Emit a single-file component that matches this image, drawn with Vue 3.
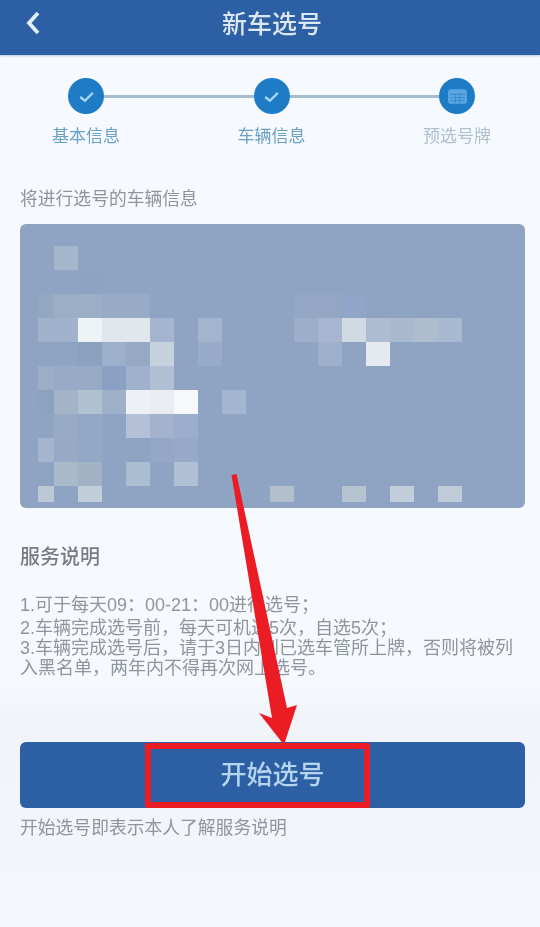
<template>
  <div class="page">
    <div class="content">
      <div class="nav-bar">
        <svg class="back-icon" viewBox="0 0 16 26" fill="none">
          <path d="M13 3 L4 13 L13 23" stroke="#e3eef7" stroke-width="3.8" />
        </svg>
        <div class="nav-title">新车选号</div>
      </div>

      <div class="steps">
        <div class="step-line"></div>
        <div v-for="step in steps" :key="step.label" class="step">
          <div class="step-circle">
            <svg v-if="step.done" class="step-icon" viewBox="0 0 20 20" fill="none">
              <path d="M4 10.5 L8.5 14 L16 6.5" stroke="#a9d6f3" stroke-width="2.2" />
            </svg>
            <svg v-else class="step-icon" viewBox="0 0 20 20" fill="#5aa6e0">
              <rect x="1" y="3" width="18" height="14" rx="3" />
              <path d="M3 8 H17 M3 11 H17 M3 14 H17 M8 8 V16 M12 8 V16" stroke="#2f85cf" stroke-width="0.8" />
            </svg>
          </div>
          <div class="step-label" :class="{ pending: !step.done }">{{ step.label }}</div>
        </div>
      </div>

      <div class="section-label">将进行选号的车辆信息</div>

      <div class="car-card">
        <div
          v-for="cell in cells"
          :key="cell.row + '-' + cell.col"
          :style="{ gridRow: cell.row + 1, gridColumn: cell.col + 1, backgroundColor: cell.color }"
        ></div>
      </div>

      <div class="service-title">服务说明</div>
      <div class="service-text">
        <div>1.可于每天09：00-21：00进行选号；</div>
        <div class="gap">2.车辆完成选号前，每天可机选5次，自选5次；</div>
        <div>3.车辆完成选号后，请于3日内到已选车管所上牌，否则将被列入黑名单，两年内不得再次网上选号。</div>
      </div>

      <div class="bottom-area">
        <button class="start-btn">开始选号</button>
        <div class="start-note">开始选号即表示本人了解服务说明</div>
      </div>
    </div>

    <!-- red annotation on top of the screenshot -->
    <div class="mark-box"></div>
    <svg class="mark-arrow" viewBox="0 0 540 927">
      <polygon points="231.5,475 236.5,474 287,708 297,705 284,745 259,713 272,718" fill="#ec1c24" />
    </svg>
  </div>
</template>

<script setup>
const steps = [
  { label: '基本信息', done: true },
  { label: '车辆信息', done: true },
  { label: '预选号牌', done: false }
]

// mosaic blocks over the blurred licence card: [row, col, colour]
const raw = [
  [0, 1, '#a3b6cb'],
  [1, 2, '#8ea3c2'],
  [2, 0, '#93a7c3'], [2, 1, '#9aaec6'], [2, 2, '#9aaec6'], [2, 3, '#98abc6'], [2, 4, '#98abc6'],
  [2, 11, '#93a6c4'], [2, 12, '#93a6c4'], [2, 13, '#90a6c8'],
  [3, 0, '#a0b2cc'], [3, 1, '#a0b2cc'], [3, 2, '#eef3f5'], [3, 3, '#dfe6ec'], [3, 4, '#dfe6ec'],
  [3, 5, '#a5b5cf'], [3, 7, '#a3b4cf'], [3, 11, '#9caeca'], [3, 12, '#a7b5d0'], [3, 13, '#cfdae2'],
  [3, 14, '#adbbd3'], [3, 15, '#a9b9d0'], [3, 16, '#adbccf'], [3, 17, '#a8b9d2'],
  [4, 2, '#8aa1bf'], [4, 3, '#9db0cb'], [4, 4, '#95a9c5'], [4, 5, '#c5d2de'], [4, 7, '#98abc9'],
  [4, 12, '#9eb0cb'], [4, 14, '#e4eaf0'],
  [5, 0, '#9cadc8'], [5, 1, '#98abc6'], [5, 2, '#98abc6'], [5, 3, '#8aa1c3'], [5, 4, '#9fb1cc'], [5, 5, '#b0bfd3'],
  [6, 0, '#8ca2bf'], [6, 1, '#a3b4c9'], [6, 2, '#b0c1d2'], [6, 3, '#9fb1c9'], [6, 4, '#edf1f6'],
  [6, 5, '#e9edf2'], [6, 6, '#f6f9fb'], [6, 8, '#a4b6cf'],
  [7, 1, '#98abc6'], [7, 2, '#93a8c4'], [7, 4, '#b3c0d8'], [7, 5, '#a3b3cd'], [7, 6, '#9aadcb'],
  [8, 0, '#a5b5cf'], [8, 1, '#96aac6'], [8, 2, '#93a8c4'], [8, 5, '#94a8c6'], [8, 6, '#96a9c7'],
  [9, 1, '#a9bacb'], [9, 2, '#a2b3c6'], [9, 4, '#abbdd0'], [9, 6, '#b0c1d6'],
  [10, 0, '#bcc8d6'], [10, 2, '#c3cedb'], [10, 10, '#b3bfcd'], [10, 13, '#b6c3d1'], [10, 15, '#c3cedc'], [10, 17, '#bfcbd9']
]

const cells = raw.map(([row, col, color]) => ({ row, col, color }))
</script>

<style scoped>
.page {
  position: relative;
  width: 540px;
  height: 927px;
  overflow: hidden;
  background: linear-gradient(#f6faff 0, #f6faff 680px, #f0f4f8 720px, #f4f7fb 927px);
  font-family: "Liberation Sans", "Noto Sans CJK SC", sans-serif;
}

.content {
  filter: blur(0.7px);
}

.nav-bar {
  position: relative;
  height: 55px;
  display: flex;
  align-items: center;
  justify-content: center;
  background-color: #2d5fa5;
  box-shadow: 0 1px 2px rgba(40, 80, 130, 0.3);
}

.back-icon {
  position: absolute;
  left: 25px;
  top: 10px;
  width: 16px;
  height: 26px;
}

.nav-title {
  margin: -11px 0 0 4px;
  font-size: 25px;
  font-weight: 500;
  color: #dbe7f2;
}

.steps {
  position: relative;
  display: flex;
  justify-content: space-between;
  padding: 23px 47px 0 50px;
}

.step-line {
  position: absolute;
  left: 86px;
  right: 83px;
  top: 40px;
  height: 3px;
  background-color: #a3bccf;
}

.step {
  position: relative;
  width: 72px;
  display: flex;
  flex-direction: column;
  align-items: center;
}

.step-circle {
  width: 36px;
  height: 36px;
  border-radius: 50%;
  background-color: #1e7cc6;
  display: flex;
  align-items: center;
  justify-content: center;
}

.step-icon {
  width: 21px;
  height: 21px;
}

.step-label {
  margin-top: 11px;
  font-size: 17px;
  line-height: 24px;
  color: #6aa0c4;
  white-space: nowrap;
}

.step-label.pending {
  color: #aebecd;
}

.section-label {
  margin: 37px 0 0 20px;
  font-size: 17.8px;
  line-height: 26px;
  color: #8f959c;
}

.car-card {
  margin: 12px 15px 0 20px;
  height: 284px;
  box-sizing: border-box;
  padding: 22px 0 0 18px;
  border-radius: 6px;
  background-color: #8fa3c2;
  display: grid;
  grid-template-columns: 16px repeat(17, 24px);
  grid-template-rows: repeat(10, 24px) 16px;
}

.service-title {
  margin: 36px 0 0 20px;
  font-size: 20px;
  line-height: 26px;
  font-weight: 500;
  color: #777c83;
}

.service-text {
  margin: 25px 20px 0 20px;
  width: 500px;
  font-size: 18px;
  line-height: 20px;
  color: #8f959c;
}

.service-text .gap {
  margin-top: 3px;
}

.bottom-area {
  position: absolute;
  left: 20px;
  top: 742px;
  width: 505px;
}

.start-btn {
  display: block;
  width: 100%;
  height: 66px;
  padding: 0 0 5px;
  border: none;
  border-radius: 6px;
  background-color: #2d5fa5;
  color: #b5d5ee;
  font-family: inherit;
  font-size: 26px;
  font-weight: 500;
}

.start-note {
  margin-top: 8px;
  font-size: 17.8px;
  line-height: 24px;
  color: #8f959c;
}

.mark-box {
  position: absolute;
  left: 145px;
  top: 743px;
  width: 225px;
  height: 65px;
  box-sizing: border-box;
  border: 6px solid #ec1c24;
  border-radius: 2px;
}

.mark-arrow {
  position: absolute;
  left: 0;
  top: 0;
  width: 540px;
  height: 927px;
}
</style>
